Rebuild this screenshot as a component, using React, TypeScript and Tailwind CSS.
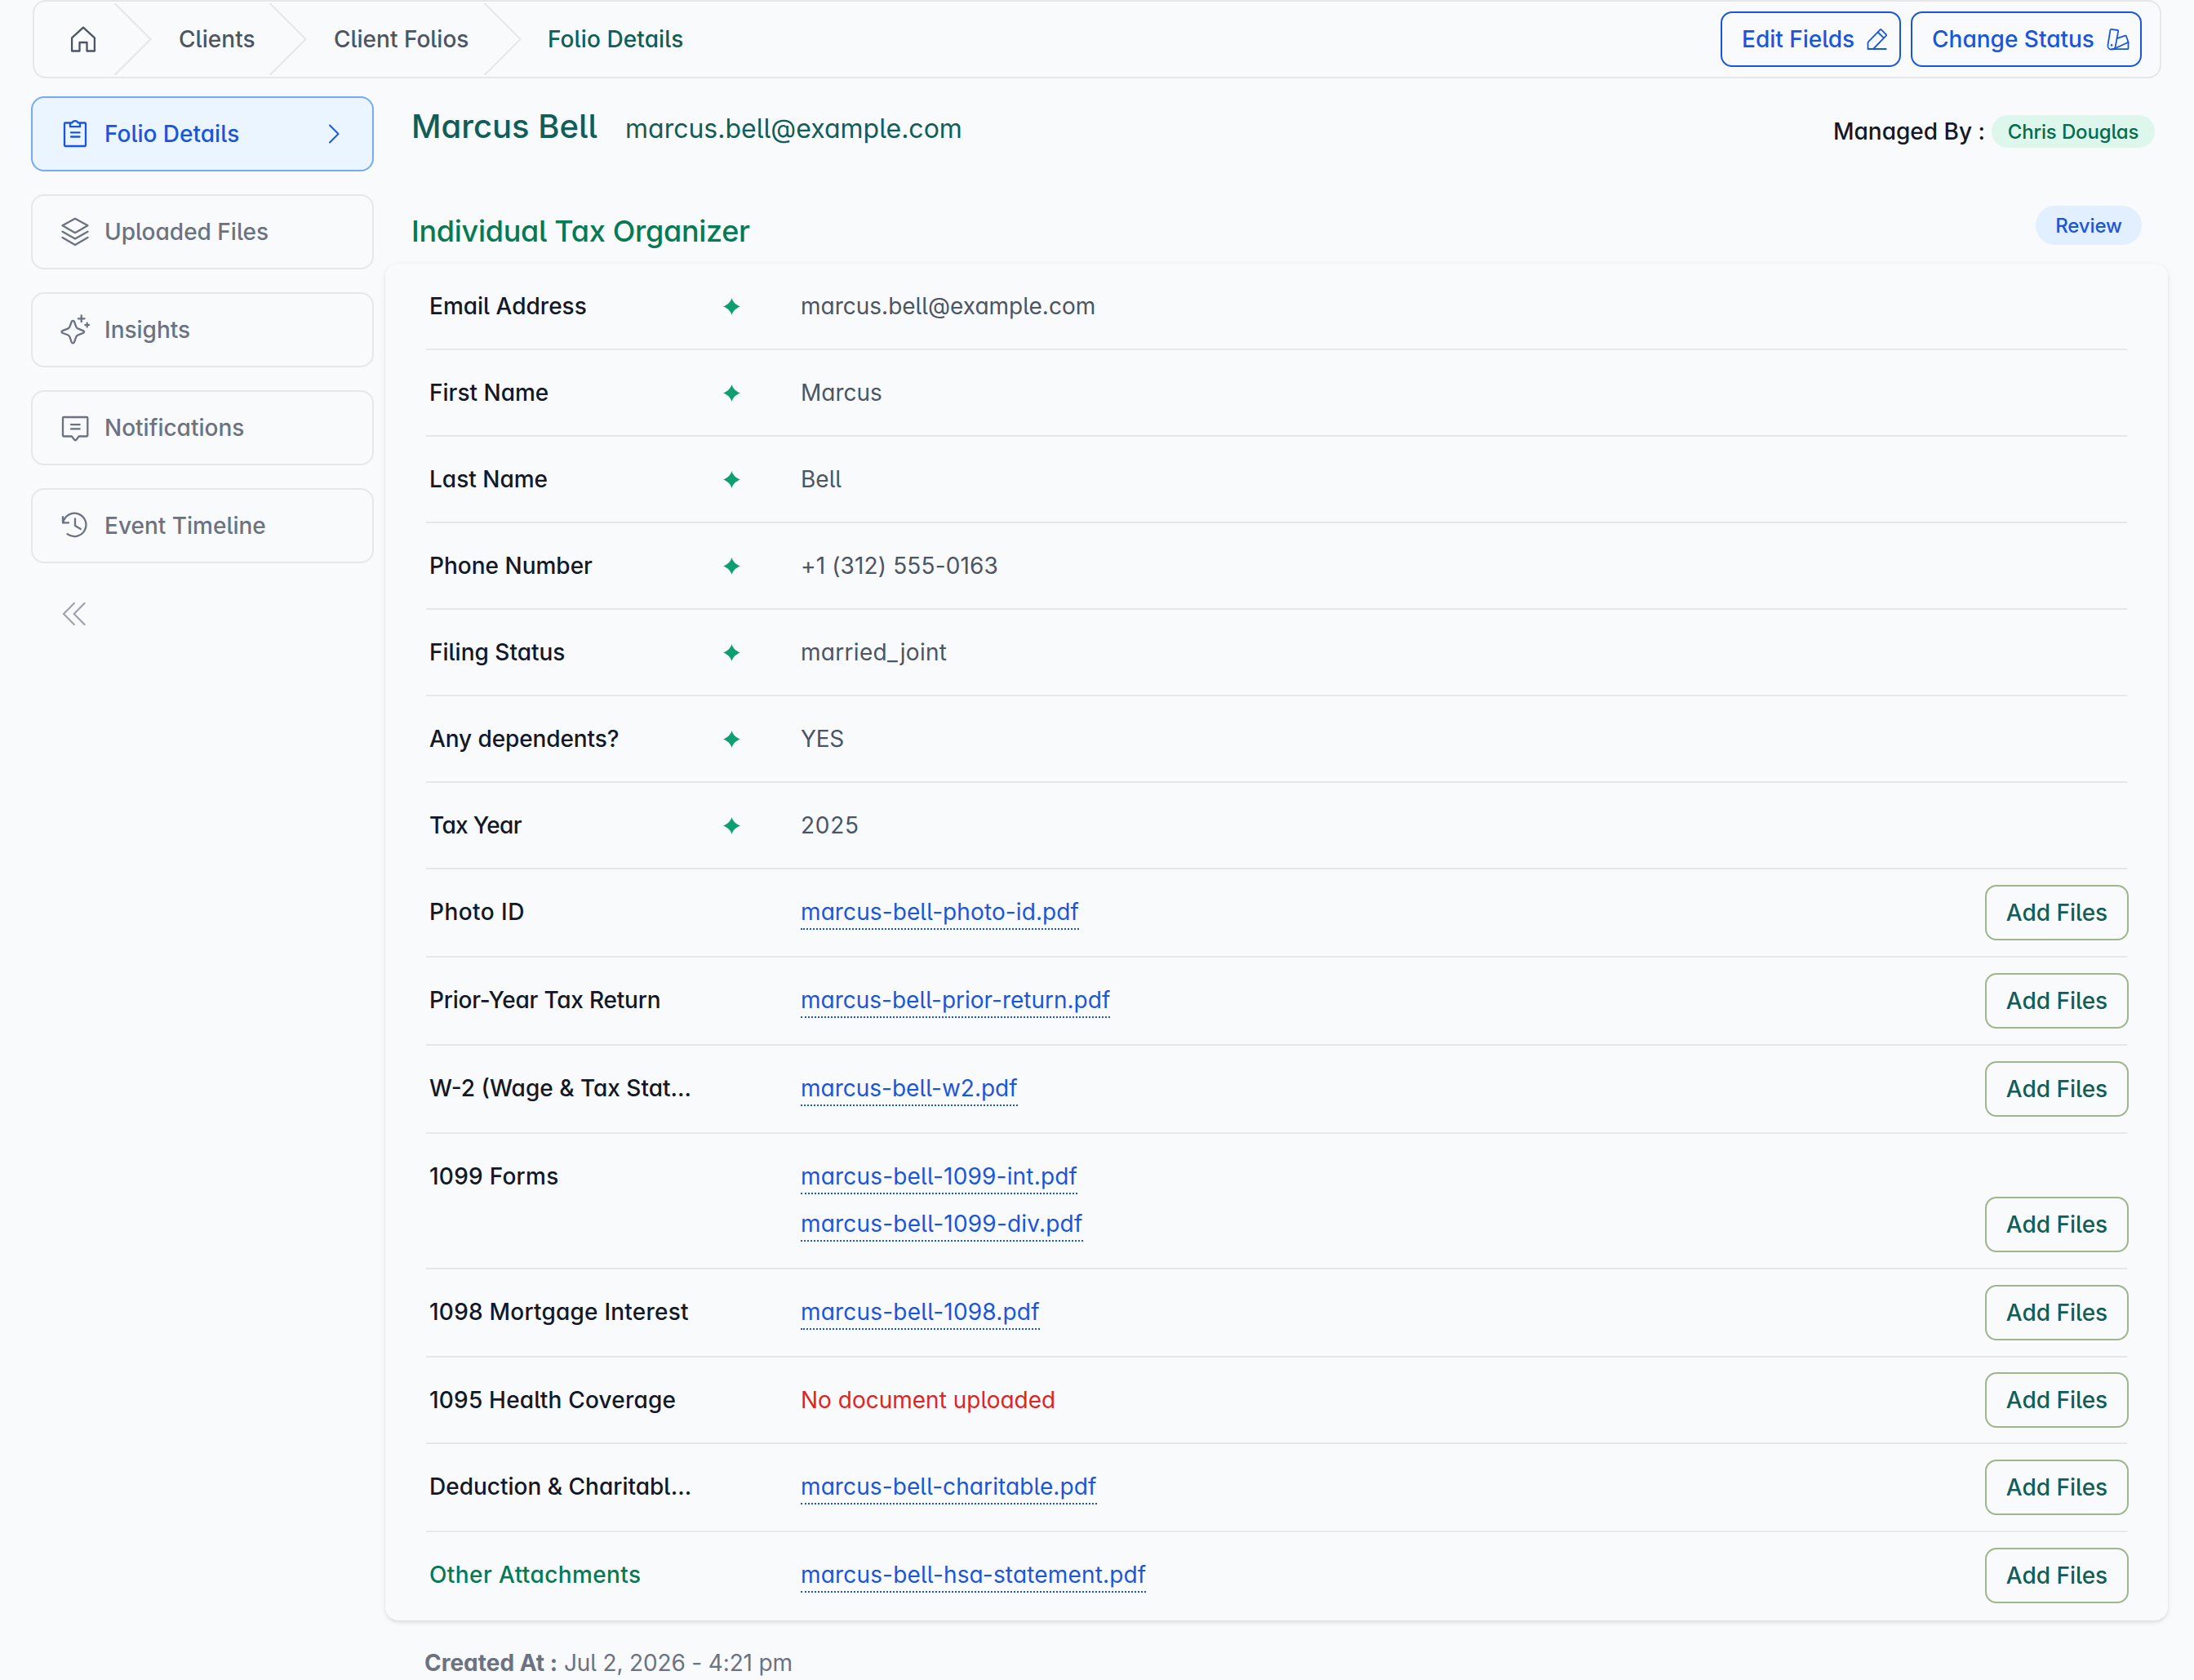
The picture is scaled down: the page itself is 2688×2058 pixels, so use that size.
import React from 'react';

interface FolioField {
  label: string;
  labelClass?: string;
  value?: string;
  valueClass?: string;
  files?: { name: string; className?: string }[];
  upload?: boolean;
}

const fields: FolioField[] = [
  { label: 'Email Address', value: 'marcus.bell@example.com' },
  { label: 'First Name', value: 'Marcus' },
  { label: 'Last Name', value: 'Bell' },
  { label: 'Phone Number', value: '+1 (312) 555-0163', valueClass: 'tracking-[0.15px]' },
  { label: 'Filing Status', value: 'married_joint', valueClass: 'tracking-[0.3px]' },
  { label: 'Any dependents?', labelClass: 'text-[#111827] tracking-[-0.1px]', value: 'YES', valueClass: 'tracking-[-0.3px]' },
  { label: 'Tax Year', labelClass: 'text-[#111827] tracking-[-0.65px]', value: '2025', valueClass: 'tracking-[0.7px]' },
  {
    label: 'Photo ID',
    labelClass: 'text-[#111827] tracking-[0.45px]',
    files: [{ name: 'marcus-bell-photo-id.pdf', className: 'tracking-[0.1px]' }],
    upload: true,
  },
  {
    label: 'Prior-Year Tax Return',
    labelClass: 'text-[#111827] tracking-[-0.22px]',
    files: [{ name: 'marcus-bell-prior-return.pdf' }],
    upload: true,
  },
  { label: 'W-2 (Wage & Tax Stat...', files: [{ name: 'marcus-bell-w2.pdf' }], upload: true },
  {
    label: '1099 Forms',
    labelClass: 'text-[#111827] tracking-[0.25px]',
    files: [
      { name: 'marcus-bell-1099-int.pdf', className: 'tracking-[0.18px]' },
      { name: 'marcus-bell-1099-div.pdf', className: 'tracking-[0.2px]' },
    ],
    upload: true,
  },
  {
    label: '1098 Mortgage Interest',
    labelClass: 'text-[#111827] tracking-[0.22px]',
    files: [{ name: 'marcus-bell-1098.pdf', className: 'tracking-[0.2px]' }],
    upload: true,
  },
  { label: '1095 Health Coverage', labelClass: 'text-[#111827] tracking-[0.2px]', upload: true },
  {
    label: 'Deduction & Charitabl...',
    files: [{ name: 'marcus-bell-charitable.pdf', className: 'tracking-[0.1px]' }],
    upload: true,
  },
  {
    label: 'Other Attachments',
    labelClass: 'text-[#057a55] tracking-[0.4px]',
    files: [{ name: 'marcus-bell-hsa-statement.pdf', className: 'tracking-[0.17px]' }],
    upload: true,
  },
];

const Icon: React.FC<{ children: React.ReactNode; className?: string; box?: string }> = ({
  children,
  className = 'w-10 h-10',
  box = '0 0 40 40',
}) => (
  <svg
    className={`shrink-0 ${className}`}
    viewBox={box}
    fill="none"
    stroke="currentColor"
    strokeWidth="2.3"
    strokeLinecap="round"
    strokeLinejoin="round"
  >
    {children}
  </svg>
);

const menu = [
  {
    label: 'Folio Details',
    icon: (
      <>
        <path d="M13.5 6.5H8a1 1 0 0 0-1 1V34a1 1 0 0 0 1 1h24a1 1 0 0 0 1-1V7.5a1 1 0 0 0-1-1h-5.5" />
        <path d="M14 11.2V7.5a1 1 0 0 1 1-1h1.2a4.2 4.2 0 0 1 7.6 0H25a1 1 0 0 1 1 1v3.7z" />
        <path d="M15 18.4h10.5M15 23.5h10.5" />
      </>
    ),
  },
  {
    label: 'Uploaded Files',
    icon: (
      <>
        <path d="M20 3.8 35.5 12.3 20 21.2 4.5 12.3z" />
        <path d="M4.5 19.8 20 28.5l15.5-8.7M4.5 27 20 36l15.5-9" />
      </>
    ),
  },
  {
    label: 'Insights',
    icon: (
      <>
        <path d="M15.7 10c.6-1.6 2.7-1.6 3.3 0l2.3 6.3a4 4 0 0 0 2.3 2.3l6.3 2.5c1.6.6 1.6 2.3 0 2.9l-6.3 2.3a4 4 0 0 0-2.3 2.3L19 35.2c-.6 1.6-2.7 1.6-3.3 0l-2.3-6.6a4 4 0 0 0-2.3-2.3L4.7 24c-1.6-.6-1.6-2.3 0-2.9l6.4-2.5a4 4 0 0 0 2.3-2.3z" />
        <path d="M27.7 2.4v7.8M23.8 6.3h7.8M34.7 11.7v4.8M32.3 14.1h4.8" />
      </>
    ),
  },
  {
    label: 'Notifications',
    icon: (
      <>
        <path d="M6 7h28.3a1 1 0 0 1 1 1v21.5a1 1 0 0 1-1 1h-9.6l-3.3 4.2c-.6.8-1.6.8-2.2 0l-3.3-4.2H6a1 1 0 0 1-1-1V8a1 1 0 0 1 1-1z" />
        <path d="M15 16.1h10.7M15 21.4h10.7" />
      </>
    ),
  },
  {
    label: 'Event Timeline',
    icon: (
      <>
        <path d="M5 9.2v7.2h7" />
        <path d="M5.3 16.2a14.2 14.2 0 1 1 5.2 13.9" />
        <path d="M20 11.5V20l6.8 4" />
      </>
    ),
  },
];

const Separator = () => (
  <svg className="w-[46px] h-[88px] shrink-0 text-[#e5e7eb]" viewBox="0 0 46 88" fill="none" stroke="currentColor" strokeWidth="2">
    <path d="M.5 0 44.5 44 .5 88" />
  </svg>
);

const Header = () => (
  <header className="ml-10 w-[2608px] h-24 border-2 border-[#e5e7eb] rounded-2xl flex items-center justify-between pl-11 pr-[22px] text-[28px] leading-10 font-medium text-[#4b5563]">
    <nav className="flex items-center">
      <Icon className="w-8 h-8" box="0 0 32 32">
        <path d="M2.1 14.3 16 1.6l13.9 12.7V30.5H20.5V20h-9v10.5H2.1z" />
      </Icon>
      <div className="ml-[22px]"><Separator /></div>
      <div className="w-[144px] pl-[33px] whitespace-nowrap tracking-[0.05px]">Clients</div>
      <Separator />
      <div className="w-[217px] pl-[33px] whitespace-nowrap">Client Folios</div>
      <Separator />
      <div className="pl-8 whitespace-nowrap text-[#115e59] tracking-[0.1px]">Folio Details</div>
    </nav>
    <div className="flex gap-3 text-[#1a56db]">
      <button className="w-[221px] h-[68px] border-2 border-[#1a56db] rounded-[14px] flex items-center justify-between pl-6 pr-[13px] whitespace-nowrap">
        Edit Fields
        <Icon className="w-7 h-7" box="0 0 28 28">
          <path strokeWidth="1.8" d="M2.5 26v-7.5a2 2 0 0 1 .6-1.4L17.5 2.3a1 1 0 0 1 1.4 0l6 6a1 1 0 0 1 0 1.4L9 26M14.8 5.500l7.200 7.200M2.500 26h22.300" />
        </Icon>
      </button>
      <button className="w-[283px] h-[68px] border-2 border-[#1a56db] rounded-[14px] flex items-center justify-between pl-6 pr-[13px] whitespace-nowrap">
        Change Status
        <Icon className="w-7 h-7" box="0 0 28 28">
          <g strokeWidth="1.8">
            <path d="M5.6 1.8 13.4 3a1 1 0 0 1 .8 1.2l-3.4 18.5a4.700 4.700 0 0 1-9.300-1.600L4.500 2.600a1 1 0 0 1 1.100-.8z" />
            <path d="m12.7 13.1 10-3.5a1 1 0 0 1 1.3.6l2.5 7.5-18.3 8.500" />
            <path d="M26.5 17.700V25.200a1 1 0 0 1-1 1H6.300" />
          </g>
          <circle cx="6.1" cy="21.4" r="1.3" fill="currentColor" stroke="none" />
        </Icon>
      </button>
    </div>
  </header>
);

const Sidebar = () => (
  <aside className="w-[420px] shrink-0 flex flex-col gap-7">
    {menu.map((item, idx) => (
      <div
        key={item.label}
        className={`h-[92px] border-2 rounded-2xl flex items-center pl-8 pr-[38px] text-[28px] font-medium whitespace-nowrap ${
          idx === 0 ? 'bg-[#ebf5ff] border-[#76a9fa] text-[#1a56db]' : 'border-[#e5e7eb] text-[#6b7280]'
        }`}
      >
        <Icon>{item.icon}</Icon>
        <span className="ml-4 flex-1">{item.label}</span>
        {idx === 0 && (
          <Icon className="w-4 h-6" box="0 0 16 24">
            <path strokeWidth="2" d="M2 1.5 12.5 12 2 22.5" />
          </Icon>
        )}
      </div>
    ))}
    <Icon className="w-8 h-8 ml-9 mt-[18px] text-[#9ca3af]" box="0 0 32 32">
      <path strokeWidth="2.2" d="M16.800 3 4 16l12.800 13M29.500 3 16.700 16l12.800 13" />
    </Icon>
  </aside>
);

const FieldRow: React.FC<{ field: FolioField }> = ({ field }) => (
  <div className="flex border-b-2 border-[#e5e7eb] last:border-transparent text-[28px] leading-10 whitespace-nowrap">
    <div className={`w-[364px] shrink-0 pt-8 pl-1 font-medium ${field.labelClass ?? 'text-[#111827]'}`}>{field.label}</div>
    <div className="w-[95px] shrink-0 pt-[42px]">
      {!field.upload && (
        <svg className="w-[21px] h-[21px] text-[#0e9f6e]" viewBox="0 0 20 20" fill="currentColor">
          <path d="M10 0c1.200 4.400 4.500 8 10 10-5.500 2-8.800 5.600-10 10C8.800 15.600 5.500 12 0 10 5.500 8 8.800 4.400 10 0z" />
        </svg>
      )}
    </div>
    <div className="flex-1 py-8 flex flex-col items-start gap-4 text-[#4b5563]">
      {field.value && <span className={field.valueClass}>{field.value}</span>}
      {field.files?.map((file) => (
        <a key={file.name} className={`border-b-2 border-dotted border-[#1a56db] text-[#1a56db] ${file.className ?? ''}`}>
          {file.name}
        </a>
      ))}
      {field.upload && !field.files && <span className="text-[#e02424]">No document uploaded</span>}
    </div>
    {field.upload && (
      <button
        className={`w-[176px] h-[68px] -mr-0.5 self-end border-2 border-[#9fb58c] rounded-[14px] font-medium text-[#115e59] ${
          field.files ? 'mb-[19px]' : 'mb-[18px]'
        }`}
      >
        Add Files
      </button>
    )}
  </div>
);

export default function App() {
  return (
    <div className="w-[2688px] h-[2058px] overflow-hidden bg-[#f9fafc] font-['Inter',sans-serif] [font-feature-settings:'cv11','cv05']">
      <Header />
      <div className="flex gap-[14px] pl-[38px] pt-[22px]">
        <Sidebar />
        <main className="w-[2184px]">
          <div className="h-[72px] pl-8 pr-4 flex items-center justify-between whitespace-nowrap">
            <div className="flex items-baseline gap-[34px] mt-0.5 text-[#115e59]">
              <h1 className="text-[40px] font-medium">Marcus Bell</h1>
              <span className="text-[32px]">marcus.bell@example.com</span>
            </div>
            <div className="mt-[13px] flex items-center gap-2 text-[28px] leading-10 font-medium text-[#111827]">
              <span>Managed By :</span>
              <span className="w-[200px] h-10 rounded-full bg-[#def7ec] text-[#046c4e] text-2xl leading-[42px] tracking-[-0.15px] text-center">
                Chris Douglas
              </span>
            </div>
          </div>
          <div className="mt-[62px] h-[62px] mb-[9px] pl-8 pr-8 flex items-start justify-between whitespace-nowrap">
            <h2 className="text-[36px] leading-[62px] font-medium tracking-[-0.3px] text-[#057a55]">Individual Tax Organizer</h2>
            <span className="w-[130px] h-12 rounded-full bg-[#e1effe] text-[#1a56db] text-2xl leading-[50px] font-medium tracking-[-0.1px] text-center">
              Review
            </span>
          </div>
          <section className="rounded-2xl pl-[50px] pr-[50px] shadow-[0_2px_6px_rgba(0,0,0,0.1),0_2px_4px_-2px_rgba(0,0,0,0.1)]">
            {fields.map((field) => (
              <FieldRow key={field.label} field={field} />
            ))}
          </section>
          <p className="mt-8 pl-12 text-[28px] leading-10 text-[#6b7280] whitespace-nowrap">
            <span className="font-bold">Created At :</span> <span className="tracking-[-0.15px]">Jul 2, 2026 - 4:21 pm</span>
          </p>
        </main>
      </div>
    </div>
  );
}
